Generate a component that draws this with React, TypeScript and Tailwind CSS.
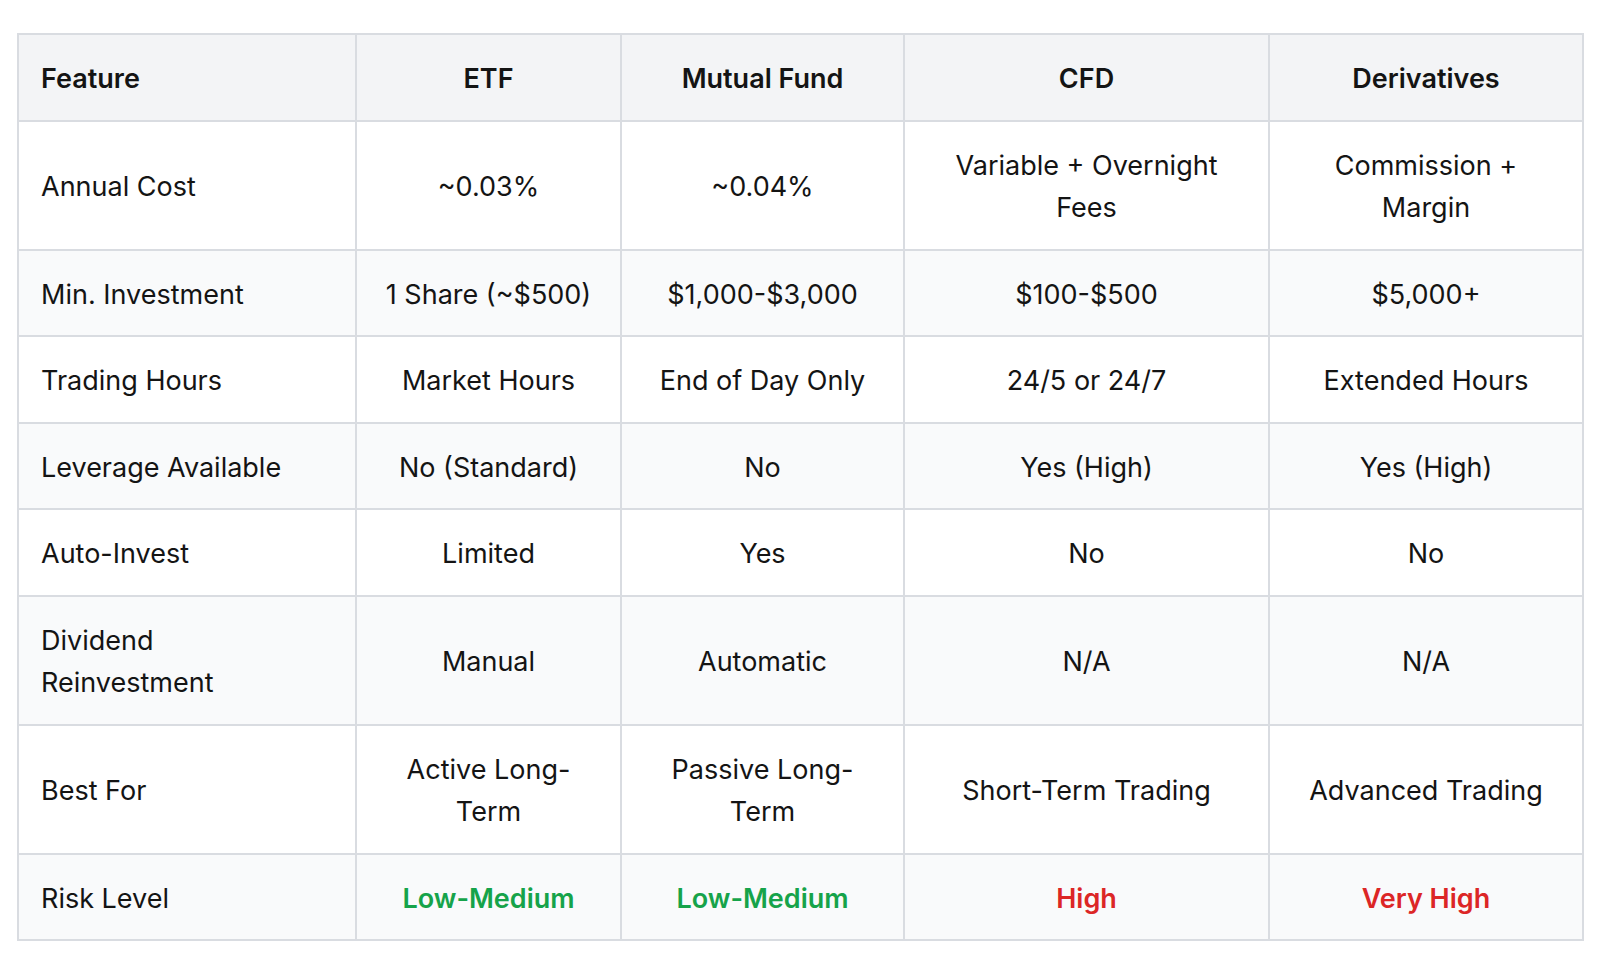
const rows: { feature: string; cells: string[]; risk?: boolean }[] = [
  { feature: 'Annual Cost', cells: ['~0.03%', '~0.04%', 'Variable + Overnight Fees', 'Commission + Margin'] },
  { feature: 'Min. Investment', cells: ['1 Share (~$500)', '$1,000-$3,000', '$100-$500', '$5,000+'] },
  { feature: 'Trading Hours', cells: ['Market Hours', 'End of Day Only', '24/5 or 24/7', 'Extended Hours'] },
  { feature: 'Leverage Available', cells: ['No (Standard)', 'No', 'Yes (High)', 'Yes (High)'] },
  { feature: 'Auto-Invest', cells: ['Limited', 'Yes', 'No', 'No'] },
  { feature: 'Dividend Reinvestment', cells: ['Manual', 'Automatic', 'N/A', 'N/A'] },
  { feature: 'Best For', cells: ['Active Long-Term', 'Passive Long-Term', 'Short-Term Trading', 'Advanced Trading'] },
  { feature: 'Risk Level', cells: ['Low-Medium', 'Low-Medium', 'High', 'Very High'], risk: true },
];

const riskColor = (v: string) =>
  v === 'Low-Medium' ? 'text-[#16a34a] font-semibold' : 'text-[#dc2626] font-semibold';

export default function App() {
  return (
    <div className="min-h-screen bg-white pt-[33px] pl-[17px] font-['Inter','Liberation_Sans',sans-serif] text-[27px] leading-[42.5px] text-[#141414]">
      <div className="w-[1565px]">
        <table className="w-full table-fixed border-collapse">
          <colgroup>
            <col className="w-[338px]" />
            <col className="w-[265px]" />
            <col className="w-[283px]" />
            <col className="w-[365px]" />
            <col className="w-[314px]" />
          </colgroup>
          <thead>
            <tr className="bg-[#f3f4f6]">
              <th className="border-2 border-[#d9dce1] pl-[22px] pr-[34px] pt-[23px] pb-[19px] text-left font-semibold">Feature</th>
              <th className="border-2 border-[#d9dce1] px-[22px] pt-[23px] pb-[19px] text-center font-semibold">ETF</th>
              <th className="border-2 border-[#d9dce1] px-[22px] pt-[23px] pb-[19px] text-center font-semibold">Mutual Fund</th>
              <th className="border-2 border-[#d9dce1] px-[22px] pt-[23px] pb-[19px] text-center font-semibold">CFD</th>
              <th className="border-2 border-[#d9dce1] px-[22px] pt-[23px] pb-[19px] text-center font-semibold">Derivatives</th>
            </tr>
          </thead>
          <tbody>
            {rows.map((r, i) => (
              <tr key={r.feature} className={i % 2 === 1 ? 'bg-[#f9fafb]' : 'bg-white'}>
                <td className="border-2 border-[#d9dce1] pl-[22px] pr-[34px] pt-[23px] pb-[19px] text-left">{r.feature}</td>
                {r.cells.map((c, j) => (
                  <td
                    key={j}
                    className={`border-2 border-[#d9dce1] px-[22px] pt-[23px] pb-[19px] text-center ${r.risk ? riskColor(c) : ''}`}
                  >
                    {c}
                  </td>
                ))}
              </tr>
            ))}
          </tbody>
        </table>
      </div>
    </div>
  );
}
